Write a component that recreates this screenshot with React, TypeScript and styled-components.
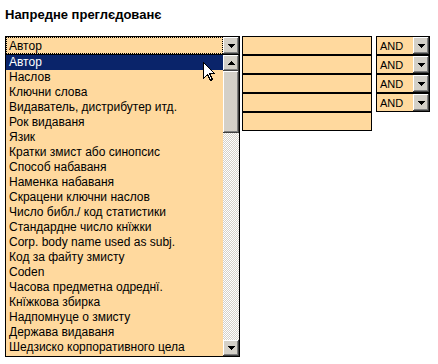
import React from 'react';
import styled, { createGlobalStyle } from 'styled-components';

const fields = [
  'Автор',
  'Наслов',
  'Ключни слова',
  'Видаватель, дистрибутер итд.',
  'Рок видаваня',
  'Язик',
  'Кратки змист або синопсис',
  'Способ набаваня',
  'Наменка набаваня',
  'Скрацени ключни наслов',
  'Число библ./ код статистики',
  'Стандардне число кнїжки',
  'Corp. body name used as subj.',
  'Код за файту змисту',
  'Coden',
  'Часова предметна одреднї.',
  'Кнїжкова збирка',
  'Надпомнуце о змисту',
  'Держава видаваня',
  'Шедзиско корпоративного цела',
];

const ORANGE = '#ffd99e';
const FACE = '#d4d0c8';
const NAVY = '#0a246a';

const GlobalStyle = createGlobalStyle`
  body {
    margin: 0;
    background: #fff;
    font-family: "Liberation Sans", Arial, sans-serif;
    color: #000;
  }
`;

const Page = styled.div`
  position: relative;
  width: 438px;
  height: 364px;
  box-sizing: border-box;
  padding: 7px 0 0 5px;
  overflow: hidden;
`;

const Title = styled.h1`
  margin: 0;
  font-size: 13px;
  line-height: 15px;
  font-weight: bold;
`;

const Form = styled.div`
  display: flex;
  align-items: flex-start;
  margin-top: 14px;
`;

const Combo = styled.div`
  display: flex;
  flex-direction: column;
  width: 235px;
`;

const SelectBox = styled.div<{ $width: number; $size: number }>`
  display: flex;
  width: ${p => p.$width}px;
  height: 19px;
  box-sizing: border-box;
  border: 1px solid #000;
  background: ${ORANGE};
  font-size: ${p => p.$size}px;
`;

const SelectValue = styled.div<{ $focused?: boolean }>`
  flex: 1;
  display: flex;
  align-items: center;
  padding-left: 3px;
  outline: ${p => (p.$focused ? '1px dotted #000' : 'none')};
  outline-offset: -1px;
`;

const Bevel = styled.div`
  display: flex;
  align-items: center;
  justify-content: center;
  background: ${FACE};
  box-shadow: inset -1px -1px #404040, inset 1px 1px #fff, inset -2px -2px #808080, inset 2px 2px ${FACE};
`;

const ArrowButton = styled(Bevel)`
  width: 16px;
  flex: none;
`;

const List = styled.div`
  display: flex;
  height: 302px;
  box-sizing: border-box;
  border: 1px solid #000;
  border-top: none;
  background: ${ORANGE};
`;

const Items = styled.ul`
  flex: 1;
  margin: 0;
  padding: 0;
  list-style: none;
  font-size: 12px;
`;

const Item = styled.li<{ $selected?: boolean }>`
  height: 15px;
  line-height: 15px;
  padding-left: 3px;
  white-space: nowrap;
  background: ${p => (p.$selected ? NAVY : 'transparent')};
  color: ${p => (p.$selected ? '#fff' : '#000')};
`;

const ScrollBar = styled.div`
  display: flex;
  flex-direction: column;
  width: 16px;
  background: repeating-conic-gradient(${FACE} 0 25%, #fff 0 50%) 0 0 / 2px 2px;
`;

const ScrollButton = styled(Bevel)`
  height: 16px;
  flex: none;
`;

const Thumb = styled(Bevel)`
  height: 62px;
  flex: none;
`;

const Track = styled.div`
  flex: 1;
`;

const Inputs = styled.div`
  display: flex;
  flex-direction: column;
  margin-left: 2px;
`;

const TextInput = styled.div`
  width: 130px;
  height: 19px;
  box-sizing: border-box;
  border: 1px solid #000;
  background: ${ORANGE};
`;

const Operators = styled.div`
  display: flex;
  flex-direction: column;
  margin-left: 4px;
`;

const Cursor = styled.svg`
  position: absolute;
  left: 203px;
  top: 62px;
`;

function Triangle({ up }: { up?: boolean }) {
  return (
    <svg width="7" height="4" viewBox="0 0 7 4" shapeRendering="crispEdges">
      <polygon points={up ? '3.5,0 7,4 0,4' : '0,0 7,0 3.5,4'} fill="#000" />
    </svg>
  );
}

export default function App() {
  return (
    <Page>
      <GlobalStyle />
      <Title>Напредне преглєдованє</Title>
      <Form>
        <Combo>
          <SelectBox $width={235} $size={12}>
            <SelectValue $focused>Автор</SelectValue>
            <ArrowButton><Triangle /></ArrowButton>
          </SelectBox>
          <List>
            <Items>
              {fields.map((f, i) => (
                <Item key={f} $selected={i === 0}>{f}</Item>
              ))}
            </Items>
            <ScrollBar>
              <ScrollButton><Triangle up /></ScrollButton>
              <Thumb />
              <Track />
              <ScrollButton><Triangle /></ScrollButton>
            </ScrollBar>
          </List>
        </Combo>
        <Inputs>
          {[0, 1, 2, 3, 4].map(i => <TextInput key={i} />)}
        </Inputs>
        <Operators>
          {[0, 1, 2, 3].map(i => (
            <SelectBox key={i} $width={54} $size={11}>
              <SelectValue>AND</SelectValue>
              <ArrowButton><Triangle /></ArrowButton>
            </SelectBox>
          ))}
        </Operators>
      </Form>
      <Cursor width="13" height="20" viewBox="0 0 13 20" shapeRendering="crispEdges">
        <polygon points="0.5,0.5 0.5,16.5 4.5,12.5 7.5,18.5 9.5,17.5 6.5,11.5 11.5,11.5" fill="#fff" stroke="#000" />
      </Cursor>
    </Page>
  );
}
